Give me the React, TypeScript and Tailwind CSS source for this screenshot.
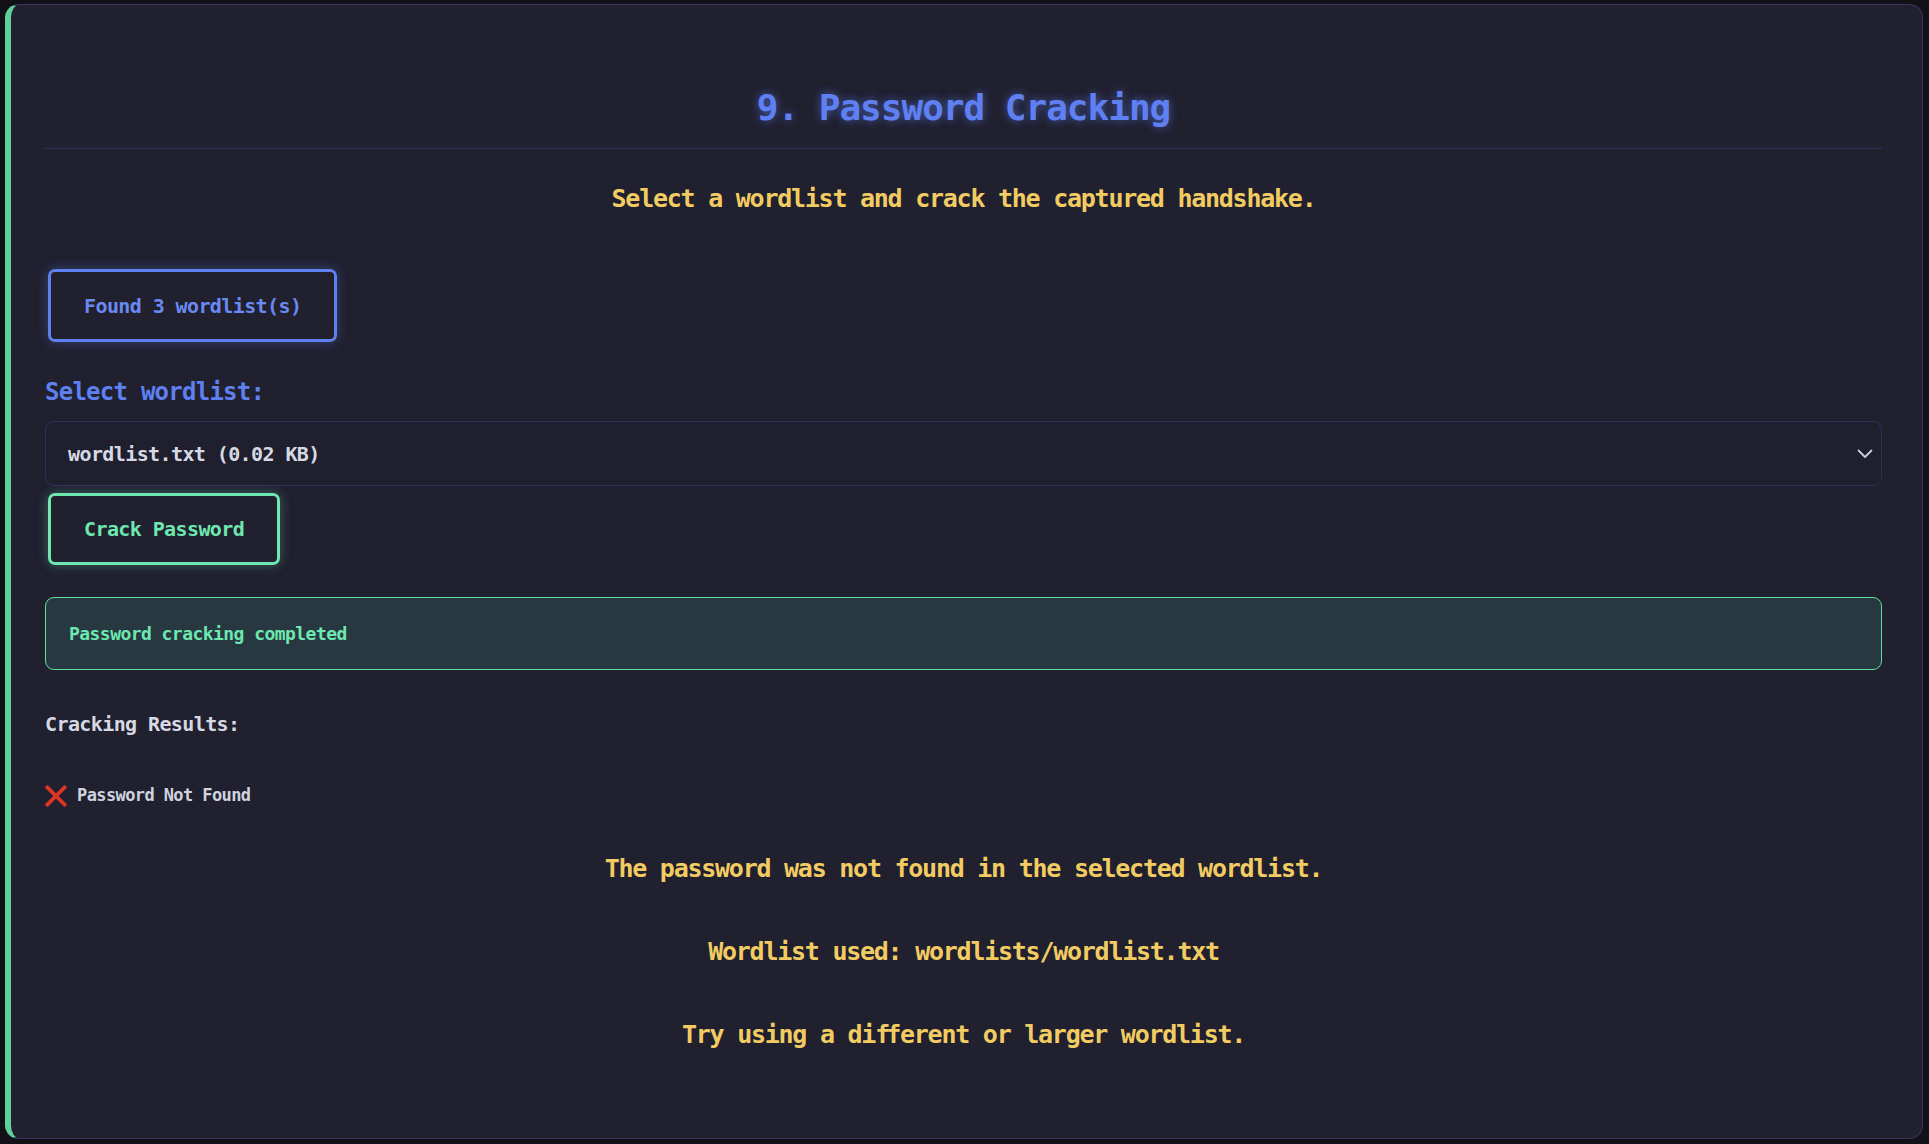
import React from "react";

const mono = { fontFamily: '"DejaVu Sans Mono", "Liberation Mono", monospace' };

function XIcon() {
  return (
    <svg width="22" height="22" viewBox="0 0 22 22" className="shrink-0">
      <path d="M2.5 2.5 L19.5 19.5 M19.5 2.5 L2.5 19.5" stroke="#de3526" strokeWidth="3.8" strokeLinecap="square" />
    </svg>
  );
}

function Chevron() {
  return (
    <svg width="16" height="10" viewBox="0 0 16 10" className="shrink-0">
      <path d="M1.5 1.5 L8 8 L14.5 1.5" stroke="#c9cede" strokeWidth="1.8" fill="none" strokeLinecap="round" strokeLinejoin="round" />
    </svg>
  );
}

export default function App() {
  return (
    <div className="w-full h-[1144px] bg-[#111117] pl-[5px] pr-[6px] pt-[4px] pb-[5px]" style={mono}>
      <div className="h-full rounded-[14px] border border-[#383564] border-l-[6px] border-l-[#5fcf9c] bg-[#20202f] pl-[34px] pr-[40px] pt-[81px]">
        <h1
          className="text-center text-[36px] leading-[44px] tracking-[-1px] font-bold text-[#5f80f2] pb-[18px] border-b border-[#34325a] [text-shadow:0_0_10px_rgba(95,128,242,0.65)]"
        >
          9. Password Cracking
        </h1>

        <p className="mt-[34px] text-center text-[25px] leading-[32px] tracking-[-1.25px] font-bold text-[#f2cc62]">
          Select a wordlist and crack the captured handshake.
        </p>

        <div className="mt-[54px] ml-[3px] flex">
          <div className="h-[73px] flex items-center px-[33px] border-[3px] border-[#5e80f0] rounded-[7px] text-[20px] tracking-[-0.6px] font-bold text-[#6a89f2] shadow-[0_0_12px_rgba(94,128,240,0.35)]">
            Found 3 wordlist(s)
          </div>
        </div>

        <div className="mt-[34px] text-[24px] leading-[32px] tracking-[-0.75px] font-bold text-[#5f80f2]">
          Select wordlist:
        </div>

        <div className="mt-[13px] h-[65px] flex items-center justify-between rounded-[9px] border border-[#33315a] bg-[#1f1f2d] pl-[22px] pr-[8px]">
          <span className="text-[20px] tracking-[-0.6px] font-bold text-[#d5d9e5]">wordlist.txt (0.02 KB)</span>
          <Chevron />
        </div>

        <div className="mt-[7px] ml-[3px] flex">
          <div className="h-[72px] flex items-center px-[33px] border-[3px] border-[#6ee7b0] rounded-[7px] text-[20px] tracking-[-0.6px] font-bold text-[#6ee7b0] shadow-[0_0_12px_rgba(110,231,176,0.35)]">
            Crack Password
          </div>
        </div>

        <div className="mt-[32px] h-[73px] flex items-center rounded-[9px] border border-[#5ddf9f] bg-[#273840] pl-[23px]">
          <span className="text-[18px] tracking-[-0.55px] font-bold text-[#6ee7b0]">Password cracking completed</span>
        </div>

        <div className="mt-[40px] text-[20px] leading-[28px] tracking-[-0.6px] font-bold text-[#d6d9e4]">
          Cracking Results:
        </div>

        <div className="mt-[46px] flex items-center gap-[10px] h-[24px]">
          <XIcon />
          <span className="text-[17px] tracking-[-0.6px] font-bold text-[#cfd3de]">Password Not Found</span>
        </div>

        <p className="mt-[45px] text-center text-[25px] leading-[32px] tracking-[-1.25px] font-bold text-[#f2cc62]">
          The password was not found in the selected wordlist.
        </p>
        <p className="mt-[51px] text-center text-[25px] leading-[32px] tracking-[-1.25px] font-bold text-[#f2cc62]">
          Wordlist used: wordlists/wordlist.txt
        </p>
        <p className="mt-[51px] text-center text-[25px] leading-[32px] tracking-[-1.25px] font-bold text-[#f2cc62]">
          Try using a di<span className="tracking-[-4px]">f</span>ferent or larger wordlist.
        </p>
      </div>
    </div>
  );
}
